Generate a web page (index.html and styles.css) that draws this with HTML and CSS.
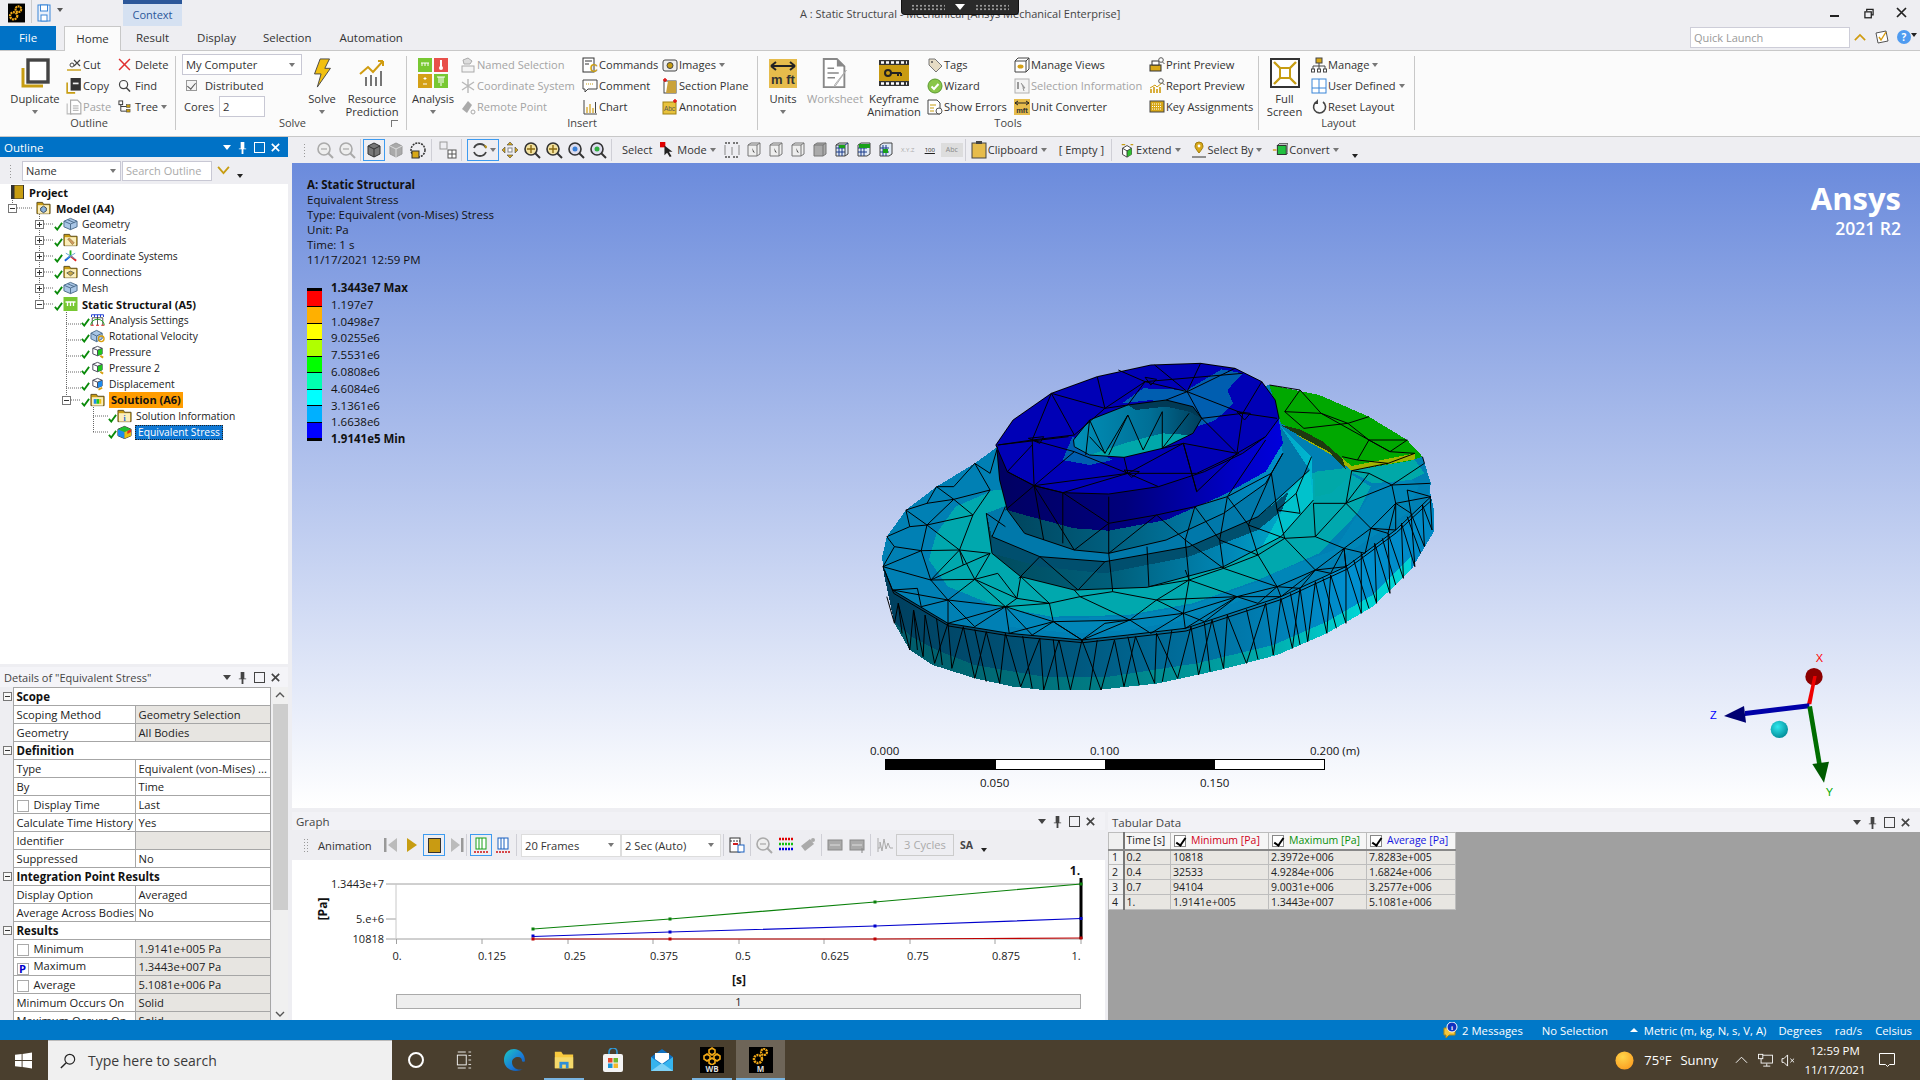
FILE: index.html
```html
<!DOCTYPE html>
<html lang="en">
<head>
<meta charset="utf-8">
<title>A : Static Structural - Mechanical</title>
<link rel="stylesheet" href="styles.css">
</head>
<body>
<svg class="sprite" width="0" height="0">
<defs>
<linearGradient id="rimG" x1="0" x2="1" y1="0" y2="0"><stop offset="0" stop-color="#003f5e"/><stop offset=".35" stop-color="#00587e"/><stop offset=".65" stop-color="#0078aa"/><stop offset=".85" stop-color="#0090d0"/><stop offset="1" stop-color="#0088c4"/></linearGradient>
<linearGradient id="rimB" x1="0" x2="1" y1="0" y2="0"><stop offset="0" stop-color="#005a68"/><stop offset=".4" stop-color="#007c84"/><stop offset=".7" stop-color="#00a8a8"/><stop offset=".9" stop-color="#00d4d4"/></linearGradient>
<linearGradient id="hubS" x1="0" x2="1" y1="0" y2="0"><stop offset="0" stop-color="#004a5c"/><stop offset=".4" stop-color="#00607c"/><stop offset=".75" stop-color="#0088b8"/><stop offset="1" stop-color="#00b8d0"/></linearGradient>
<linearGradient id="cylN" x1="0" x2="1" y1="0" y2="0"><stop offset="0" stop-color="#000062"/><stop offset=".45" stop-color="#00007c"/><stop offset=".8" stop-color="#0000c0"/><stop offset="1" stop-color="#0000dc"/></linearGradient>
<linearGradient id="cylT" x1="0" x2="1" y1="0" y2="0"><stop offset="0" stop-color="#00425a"/><stop offset=".5" stop-color="#006688"/><stop offset="1" stop-color="#0090cc"/></linearGradient>
<linearGradient id="holeG" x1="0" x2="1" y1="0" y2="0"><stop offset="0" stop-color="#0090b8"/><stop offset=".6" stop-color="#006f96"/><stop offset="1" stop-color="#003e5c"/></linearGradient>
<radialGradient id="ball" cx=".4" cy=".35" r=".7"><stop offset="0" stop-color="#30e8ee"/><stop offset="1" stop-color="#008a96"/></radialGradient>
<radialGradient id="sun" cx=".4" cy=".3" r=".8"><stop offset="0" stop-color="#ffd54a"/><stop offset="1" stop-color="#fb9a1e"/></radialGradient>
<linearGradient id="edgeG" x1="0" x2="1" y1="0" y2="1"><stop offset="0" stop-color="#1bc9c3"/><stop offset=".6" stop-color="#1a79d8"/><stop offset="1" stop-color="#0c4aa0"/></linearGradient>
</defs>
<symbol id="chk" viewBox="0 0 10 10"><path d="M1 6l2.600 3L9 1.500" fill="none" stroke="#0a8a0a" stroke-width="2"/></symbol>
<symbol id="cube" viewBox="0 0 16 14"><path d="M1 4l7-3 7 3v6l-7 3-7-3z" fill="#a9c6e6" stroke="#4a6a8a"/><path d="M1 4l7 3 7-3M8 7v6M5 2.500l7 3" fill="none" stroke="#4a6a8a"/></symbol>
<symbol id="cubeg" viewBox="0 0 16 14"><path d="M3 3l5-2 5 2v6l-5 2-5-2z" fill="#fff" stroke="#445"/><path d="M8 5l5-2v6l-5 2z" fill="#1fc81f"/><path d="M3 3l5 2 5-2M8 5v6" fill="none" stroke="#445"/><path d="M11 11l3 2" stroke="#d8a010" stroke-width="2"/></symbol>
<symbol id="cubeb" viewBox="0 0 16 14"><path d="M3 3l5-2 5 2v6l-5 2-5-2z" fill="#fff" stroke="#445"/><path d="M8 5l5-2v6l-5 2z" fill="#1c8cf0"/><path d="M3 3l5 2 5-2M8 5v6" fill="none" stroke="#445"/><path d="M9 13l4-2" stroke="#d8a010" stroke-width="2"/></symbol>
<symbol id="cuber" viewBox="0 0 16 14"><path d="M1 4l6-3 6 3v6l-6 3-6-3z" fill="#a9c6e6" stroke="#4a6a8a"/><path d="M1 4l6 3 6-3M7 7v6" fill="none" stroke="#4a6a8a"/><circle cx="12" cy="10" r="3" fill="none" stroke="#d8a010" stroke-width="1.400"/></symbol>
<symbol id="foldm" viewBox="0 0 16 14"><path d="M1 3V1h6l1 2h7v10H1z" fill="#c89b14" stroke="#5a4a1a"/><rect x="2" y="4" width="12" height="9" fill="#fbeebb"/><path d="M5 7l3-2 3 2v3l-3 2-3-2z" fill="#8ab0d8" stroke="#345"/></symbol>
<symbol id="foldt" viewBox="0 0 16 14"><path d="M1 3V1h6l1 2h7v10H1z" fill="#c89b14" stroke="#5a4a1a"/><rect x="2" y="4" width="12" height="9" fill="#fbeebb"/><path d="M5 6l5 6 2-2-5-5z" fill="#d09a60" stroke="#8a6a30" stroke-width=".6"/></symbol>
<symbol id="foldc" viewBox="0 0 16 14"><path d="M1 3V1h6l1 2h7v10H1z" fill="#c89b14" stroke="#5a4a1a"/><rect x="2" y="4" width="12" height="9" fill="#fbeebb"/><path d="M4 8l4-2 4 2-4 3z" fill="#c8a848" stroke="#665"/></symbol>
<symbol id="folds" viewBox="0 0 16 14"><path d="M1 3V1h6l1 2h7v10H1z" fill="#c89b14" stroke="#5a4a1a"/><rect x="2" y="4" width="12" height="9" fill="#fbeebb"/><rect x="4" y="6" width="3" height="5" fill="#1c8cf0"/><rect x="7" y="6" width="3" height="5" fill="#1fc81f"/><rect x="10" y="6" width="2" height="5" fill="#f0c010"/></symbol>
<symbol id="eqs" viewBox="0 0 16 14"><path d="M1 4l7-3 7 3v7l-7 3-7-3z" fill="#777" stroke="#333"/><path d="M1 4l7 3v7l-7-3z" fill="#1c8cf0"/><path d="M8 7l7-3v7l-7 3z" fill="#e8c010"/><path d="M1 4l7-3 7 3-7 3z" fill="#20c030"/><path d="M11 6l4-2v3l-4 2z" fill="#e03020"/></symbol>
<symbol id="book" viewBox="0 0 14 14"><rect x="1" y="0" width="12" height="14" fill="#c79d12" stroke="#333"/><rect x="1" y="0" width="3" height="14" fill="#333"/></symbol>
<symbol id="coord" viewBox="0 0 16 14"><path d="M8 7V1" stroke="#20b020" stroke-width="2"/><path d="M8 7L2 12" stroke="#1060e0" stroke-width="2"/><path d="M8 7l6 5" stroke="#e02020" stroke-width="2"/><path d="M3 4l10 6M13 4L3 10" stroke="#60a0d0"/></symbol>
<symbol id="ss" viewBox="0 0 14 14"><rect width="14" height="14" fill="#78c832"/><path d="M2 5h10M4 5v4M7 5v4M10 5v4" stroke="#fff" stroke-width="1.300"/></symbol>
<symbol id="an" viewBox="0 0 20 16"><path d="M2 1h16M2 1v3M6 1v3M10 1v3M14 1v3M18 1v3" stroke="#1030d0" stroke-width="1.200"/><path d="M3 15V5h14v10M10 4v11" fill="none" stroke="#222"/><path d="M1 15a9 8 0 0 1 18 0" fill="none" stroke="#10a010" stroke-width="1.200"/><path d="M1 15h4M8 15h4M15 15h4" stroke="#e02020" stroke-width="1.400"/></symbol>
<symbol id="dup" viewBox="0 0 30 30"><path d="M3 10v18h20" fill="none" stroke="#c79d12" stroke-width="3"/><rect x="8" y="2" width="20" height="22" fill="#fff" stroke="#444" stroke-width="3.400"/></symbol>
<symbol id="cut" viewBox="0 0 16 14"><path d="M8 2l6 6M14 2L8 8" stroke="#444" stroke-width="1.200"/><circle cx="6" cy="7" r="2" fill="none" stroke="#444"/><path d="M1 12h14" stroke="#c79d12" stroke-width="1.400"/></symbol>
<symbol id="del" viewBox="0 0 12 12"><path d="M1 1l10 10M11 1L1 11" stroke="#e03030" stroke-width="1.400"/></symbol>
<symbol id="copy" viewBox="0 0 14 14"><path d="M1 4v9h7" fill="none" stroke="#c79d12" stroke-width="1.400"/><rect x="4" y="0" width="9" height="11" fill="#333"/><rect x="6" y="4" width="5" height="1.500" fill="#eee"/></symbol>
<symbol id="find" viewBox="0 0 14 14"><circle cx="6" cy="6" r="4.400" fill="none" stroke="#444" stroke-width="1.300"/><path d="M9 9.500l4 4" stroke="#444" stroke-width="1.600"/></symbol>
<symbol id="paste" viewBox="0 0 14 14"><path d="M1 4v9h4" fill="none" stroke="#bbb"/><path d="M4 1h6l3 3v9H4z" fill="#fff" stroke="#aaa"/><path d="M6 6h5M6 8h5M6 10h5" stroke="#bbb"/></symbol>
<symbol id="tree" viewBox="0 0 14 14"><rect x="1" y="1" width="4" height="4" fill="none" stroke="#333"/><rect x="9" y="5" width="4" height="3" fill="#c79d12" stroke="#333" stroke-width=".5"/><rect x="9" y="10" width="4" height="3" fill="#c79d12" stroke="#333" stroke-width=".5"/><path d="M3 5v7h6M3 7h6" fill="none" stroke="#333"/></symbol>
<symbol id="bolt" viewBox="0 0 20 32"><path d="M8 1h10l-5 10h6L5 31l4-14H2z" fill="#f2c010" stroke="#444"/></symbol>
<symbol id="resp" viewBox="0 0 28 30"><path d="M2 16l8-7 5 5L25 3M25 3l-5 0M25 3v5" fill="none" stroke="#d09c10" stroke-width="2"/><path d="M8 28v-9M13 28V17M18 28v-9M23 28v-15" stroke="#555" stroke-width="1.600"/></symbol>
<symbol id="ana" viewBox="0 0 30 30"><rect width="14" height="14" fill="#78c832"/><rect x="16" width="14" height="14" fill="#e8504a"/><rect y="16" width="14" height="14" fill="#d4a016"/><rect x="16" y="16" width="14" height="14" fill="#78c832"/><path d="M3 5h8M4 5v3M7 5v3M10 5v3" stroke="#fff"/><path d="M23 2v8" stroke="#fff" stroke-width="2"/><circle cx="23" cy="10" r="2" fill="#fff"/><path d="M7 19v3M5.500 20.500h3M5 26h4" stroke="#fff"/><path d="M19 19h8M21 19v6M25 19v6M23 19v9" stroke="#fff"/></symbol>
<symbol id="named" viewBox="0 0 16 16"><path d="M3 3l5-2 4 3-2 3H4z" fill="#ddd" stroke="#aaa"/><rect x="2" y="9" width="12" height="6" fill="#f4f4f4" stroke="#aaa"/></symbol>
<symbol id="csys" viewBox="0 0 16 16"><path d="M8 1v14M2 4l12 8M14 4L2 12" stroke="#b8b8b8" stroke-width="1.400"/></symbol>
<symbol id="rpt" viewBox="0 0 16 16"><path d="M2 10l6-8 4 4-5 8z" fill="#aaa"/><circle cx="13" cy="13" r="2" fill="none" stroke="#aaa"/></symbol>
<symbol id="comment" viewBox="0 0 16 16"><path d="M1 2h14v9H6l-3 3v-3H1z" fill="#fff" stroke="#444"/><path d="M4 6h8" stroke="#c79d12" stroke-dasharray="1 1"/></symbol>
<symbol id="chart" viewBox="0 0 16 16"><path d="M2 1v14h13" fill="none" stroke="#444"/><path d="M5 14V8M8 14V5M11 14V9" stroke="#d09c10" stroke-width="1.200"/><path d="M13.500 14V3" stroke="#444"/></symbol>
<symbol id="image" viewBox="0 0 16 16"><rect x="1" y="3" width="14" height="11" rx="2" fill="#eee" stroke="#444"/><circle cx="8" cy="8.500" r="3" fill="#c79d12" stroke="#444"/></symbol>
<symbol id="sect" viewBox="0 0 16 16"><rect x="2" y="3" width="12" height="12" fill="#fff" stroke="#444"/><path d="M6 3h8v12H4z" fill="#caa23a"/><path d="M3 0v4M1 2h4" stroke="#e01010" stroke-width="1.400"/></symbol>
<symbol id="wsh" viewBox="0 0 28 32"><path d="M2 1h14l8 8v22H2z" fill="#fff" stroke="#888" stroke-width="2"/><path d="M16 1v8h8" fill="#888"/><path d="M6 11h7M6 16h12M6 21h8" stroke="#888" stroke-width="1.500"/><path d="M26 13L15 29l-2 2 1-3z" fill="#eee" stroke="#aaa"/></symbol>
<symbol id="key" viewBox="0 0 30 26"><rect width="30" height="26" fill="#333"/><rect y="5" width="30" height="16" fill="#c99b12"/><path d="M2 2.500h26M2 23.500h26" stroke="#fff" stroke-width="2.400" stroke-dasharray="3 2"/><circle cx="9" cy="13" r="3" fill="none" stroke="#222" stroke-width="2"/><path d="M12 13h10M19 13v3M22 13v3" stroke="#222" stroke-width="2"/></symbol>
<symbol id="tag" viewBox="0 0 16 16"><path d="M2 2h6l7 7-6 6-7-7z" fill="#e7dcc4" stroke="#777"/><circle cx="5" cy="5" r="1" fill="#555"/></symbol>
<symbol id="wiz" viewBox="0 0 16 16"><circle cx="8" cy="8" r="7" fill="#8ac64a" stroke="#5a9a30"/><path d="M4.500 8.500l2.500 2.500 4.500-5" fill="none" stroke="#fff" stroke-width="2"/></symbol>
<symbol id="err" viewBox="0 0 16 16"><path d="M1 1h9l3 3v11H1z" fill="#fff" stroke="#444"/><path d="M3 6h6M3 9h4M3 12h4" stroke="#c79d12"/><circle cx="12" cy="12" r="3" fill="#fff" stroke="#555"/></symbol>
<symbol id="views" viewBox="0 0 16 16"><path d="M1 4l3-3h11v11l-3 3H1z" fill="#fff" stroke="#444"/><path d="M1 4h11v11M12 4l3-3" fill="none" stroke="#444"/><ellipse cx="6.500" cy="9.500" rx="3" ry="2" fill="#d4a016"/></symbol>
<symbol id="selinf" viewBox="0 0 16 16"><rect x="1" y="1" width="14" height="14" fill="#f4f4f4" stroke="#b0b0b0"/><path d="M4 4v7" stroke="#999" stroke-width="2"/><path d="M7 5l4 5-2 0 1 3" fill="#999" stroke="#999"/></symbol>
<symbol id="print" viewBox="0 0 16 16"><rect x="1" y="8" width="11" height="6" fill="#d8a818" stroke="#333"/><rect x="3" y="4" width="7" height="4" fill="#fff" stroke="#333"/><circle cx="12" cy="3" r="2.300" fill="#fff" stroke="#555"/><path d="M13.500 5l2 2" stroke="#555"/></symbol>
<symbol id="rprev" viewBox="0 0 16 16"><path d="M2 15V11M5 15V9M8 15V11M11 15V9" stroke="#d09c10" stroke-width="1.600"/><path d="M1 10l5-3 2 2 5-4" fill="none" stroke="#d09c10"/><circle cx="12" cy="3" r="2.300" fill="#fff" stroke="#555"/><path d="M13.500 5l2 2" stroke="#555"/></symbol>
<symbol id="kbd" viewBox="0 0 16 16"><rect x="1" y="2" width="14" height="11" fill="#d8a818" stroke="#444"/><path d="M3 5h10M3 7.500h10M3 10h10" stroke="#fff" stroke-dasharray="1 1"/></symbol>
<symbol id="full" viewBox="0 0 30 30"><rect x="1" y="1" width="28" height="28" fill="#fff" stroke="#333" stroke-width="2"/><rect x="10" y="10" width="10" height="10" fill="none" stroke="#c79d12" stroke-width="2"/><path d="M4 4l6 6M26 4l-6 6M4 26l6-6M26 26l-6-6" stroke="#c79d12" stroke-width="2.400"/></symbol>
<symbol id="mgr" viewBox="0 0 16 16"><rect x="5" y="1" width="6" height="5" fill="#d8a818" stroke="#444"/><path d="M8 6v3M2 12V9h12v3M8 9v3" fill="none" stroke="#444"/><rect x="0.500" y="12" width="3" height="3" fill="#fff" stroke="#444"/><rect x="6.500" y="12" width="3" height="3" fill="#fff" stroke="#444"/><rect x="12.500" y="12" width="3" height="3" fill="#fff" stroke="#444"/></symbol>
<symbol id="udef" viewBox="0 0 16 16"><rect x="1" y="1" width="14" height="14" fill="#fff" stroke="#3a86d8"/><path d="M1 10h14M8 1v14" stroke="#3a86d8"/></symbol>
<symbol id="reset" viewBox="0 0 16 16"><path d="M12 3a6 6 0 1 1-6-.5" fill="none" stroke="#444" stroke-width="1.600"/><path d="M7 0v5H3z" fill="#444"/></symbol>
<symbol id="zm" viewBox="0 0 18 18"><circle cx="8" cy="8" r="6" fill="#eee" stroke="#aaa" stroke-width="1.600"/><path d="M12 12l5 5" stroke="#aaa" stroke-width="2"/><path d="M5 8h6" stroke="#999"/></symbol>
<symbol id="zc" viewBox="0 0 18 18"><circle cx="8" cy="8" r="6" fill="#f3e2a0" stroke="#333" stroke-width="1.600"/><path d="M12 12l5 5" stroke="#333" stroke-width="2"/><path d="M8 4v8M4 8h8" stroke="#8a6a10" stroke-width="1.400"/></symbol>
<symbol id="zb" viewBox="0 0 18 18"><circle cx="8" cy="8" r="6" fill="#dde" stroke="#333" stroke-width="1.600"/><path d="M12 12l5 5" stroke="#333" stroke-width="2"/><circle cx="8" cy="8" r="2.500" fill="#3a80d8"/></symbol>
<symbol id="zg" viewBox="0 0 18 18"><circle cx="8" cy="8" r="6" fill="#dde" stroke="#333" stroke-width="1.600"/><path d="M12 12l5 5" stroke="#333" stroke-width="2"/><circle cx="8" cy="8" r="2.500" fill="#30b040"/></symbol>
<symbol id="box3" viewBox="0 0 18 18"><path d="M3 5l6-3 6 3v8l-6 3-6-3z" fill="#777" stroke="#333"/><path d="M3 5l6 3 6-3M9 8v8" fill="none" stroke="#333"/></symbol>
<symbol id="box3g" viewBox="0 0 18 18"><path d="M3 5l6-3 6 3v8l-6 3-6-3z" fill="#aaa" stroke="#999"/><path d="M3 5l6 3 6-3M9 8v8" fill="none" stroke="#ddd"/></symbol>
<symbol id="wire" viewBox="0 0 18 18"><circle cx="9" cy="9" r="7" fill="none" stroke="#333" stroke-width="1.500" stroke-dasharray="2 1"/><rect x="3" y="10" width="7" height="7" fill="#d8a818" stroke="#333"/></symbol>
<symbol id="split" viewBox="0 0 18 18"><rect x="1" y="1" width="7" height="7" fill="none" stroke="#999"/><rect x="9" y="9" width="8" height="8" fill="#fff" stroke="#555"/><path d="M13 9v8M9 13h8" stroke="#555"/></symbol>
<symbol id="rot" viewBox="0 0 18 18"><path d="M3 7a6.500 6.500 0 0 1 12 0M15 11a6.500 6.500 0 0 1-12 0" fill="none" stroke="#444" stroke-width="1.800"/><path d="M13 4l3 1-1 3" fill="#c79d12"/></symbol>
<symbol id="pan" viewBox="0 0 18 18"><path d="M9 1l3 3H6zM9 17l-3-3h6zM1 9l3-3v6zM17 9l-3 3V6z" fill="#d8a818" stroke="#444" stroke-width=".6"/><rect x="7" y="7" width="4" height="4" fill="#fff" stroke="#888"/></symbol>
<symbol id="mode" viewBox="0 0 18 18"><rect x="0" y="0" width="6" height="6" fill="#e00000"/><path d="M5 4l0 11 3-3 3 5 2-1-3-5 4 0z" fill="#222"/></symbol>
<symbol id="s1" viewBox="0 0 18 18"><path d="M2 2h6M10 2h6M2 16h6M10 16h6" stroke="#777" stroke-width="2" stroke-dasharray="2 1"/><path d="M2 4v10M9 6v8M16 4v10" stroke="#888"/></symbol>
<symbol id="s2" viewBox="0 0 18 18"><path d="M3 4l3-2h9v11l-3 2H3z" fill="#eee" stroke="#777"/><path d="M3 4h9v11M12 4l3-2" fill="none" stroke="#777"/><path d="M7 7l3 5-2-1z" fill="#555"/></symbol>
<symbol id="s2d" viewBox="0 0 18 18"><path d="M3 4l3-2h9v11l-3 2H3z" fill="#aaa" stroke="#777"/><path d="M3 4h9v11M12 4l3-2" fill="none" stroke="#777"/></symbol>
<symbol id="g1" viewBox="0 0 18 18"><path d="M3 4l3-2h9v11l-3 2H3z" fill="#dfe9f5" stroke="#444"/><path d="M3 7h9M3 11h9M6 4v11M9 4v11M12 4l3-2" fill="none" stroke="#1a3a8a"/><path d="M3 4h9v11" fill="none" stroke="#444"/><rect x="6" y="4" width="6" height="3" fill="#18a018"/></symbol>
<symbol id="g2" viewBox="0 0 18 18"><path d="M3 4l3-2h9v11l-3 2H3z" fill="#dfe9f5" stroke="#444"/><path d="M3 7h9M3 11h9M6 4v11M9 4v11" fill="none" stroke="#1a3a8a"/><rect x="4" y="3" width="11" height="4" fill="#18a018"/></symbol>
<symbol id="g3" viewBox="0 0 18 18"><path d="M3 4l3-2h9v11l-3 2H3z" fill="#dfe9f5" stroke="#444"/><path d="M3 7h9M3 11h9M6 4v11M9 4v11" fill="none" stroke="#1a3a8a"/><rect x="6" y="8" width="5" height="4" fill="#18a018"/></symbol>
<symbol id="clipb" viewBox="0 0 16 18"><rect x="1" y="2" width="14" height="15" fill="#e6bc4c" stroke="#444"/><rect x="5" y="0" width="6" height="3" fill="#444"/></symbol>
<symbol id="extd" viewBox="0 0 18 18"><path d="M4 7l5-3 5 3v7l-5 3-5-3z" fill="#fff" stroke="#333"/><path d="M9 10l5-3v7l-5 3z" fill="#30c030"/><path d="M4 7l5 3 5-3M9 10v7" fill="none" stroke="#333"/><path d="M3 3h4M13 3h3" stroke="#c79d12" stroke-width="1.500"/></symbol>
<symbol id="pin" viewBox="0 0 16 18"><path d="M8 12c-3-4-4-5-4-7a4 4 0 0 1 8 0c0 2-1 3-4 7z" fill="#d8a818" stroke="#a07c10"/><circle cx="8" cy="5" r="1.400" fill="#fff"/><path d="M1 16h14" stroke="#666" stroke-width="1.400"/></symbol>
<symbol id="conv" viewBox="0 0 18 18"><path d="M1 9h4" stroke="#d09c10" stroke-width="1.500"/><rect x="6" y="4" width="10" height="10" fill="#22c040" stroke="#222"/><path d="M6 4l2-2h10v10l-2 2" fill="none" stroke="#222"/></symbol>
<symbol id="sv" viewBox="0 0 14 18"><rect x="1" y="1" width="12" height="16" fill="#eaf1fb" stroke="#3a86d8"/><rect x="3.500" y="1" width="7" height="6" fill="#fff" stroke="#3a86d8"/><rect x="4" y="11" width="6" height="6" fill="#fff" stroke="#3a86d8"/></symbol>
<symbol id="mech" viewBox="0 0 18 20"><rect width="18" height="20" fill="#000"/><circle cx="11" cy="6" r="3" fill="none" stroke="#f0a816" stroke-width="2.200" stroke-dasharray="2 .6"/><circle cx="6" cy="13" r="3.800" fill="none" stroke="#f0a816" stroke-width="2.400" stroke-dasharray="2 .8"/></symbol>
</svg>

<div class="app">
 <header class="titlebar">
  <div class="tb-left">
   <svg class="logo"><use href="#mech"/></svg>
   <i class="vsep"></i>
   <svg class="save"><use href="#sv"/></svg>
   <i class="arr qa"></i>
   <div class="context"><span>Context</span></div>
  </div>
  <div class="title">A : Static Structural - Mechanical [Ansys Mechanical Enterprise]</div>
  <div class="rdp"><i class="dots"></i><b class="rdp-a"></b><i class="dots"></i></div>
  <div class="winctl">
   <i class="wmin"></i><svg class="wres" viewBox="0 0 11 11"><path d="M3 3V1h7v6H8" fill="none" stroke="#222" stroke-width="1.400"/><rect x="1" y="3.700" width="7" height="6.500" fill="none" stroke="#222" stroke-width="1.400"/></svg><svg class="wclose" viewBox="0 0 11 11"><path d="M1 1l9 9M10 1l-9 9" stroke="#222" stroke-width="1.700"/></svg>
  </div>
 </header>

 <nav class="tabs">
  <div class="t-file">File</div>
  <div class="t-home">Home</div>
  <div class="t-i t1">Result</div><div class="t-i t2">Display</div><div class="t-i t3">Selection</div><div class="t-i t4">Automation</div>
  <div class="quick">
   <div class="ql">Quick Launch</div>
   <svg class="ic12" viewBox="0 0 14 10"><path d="M1 8l6-6 6 6" fill="none" stroke="#d09c10" stroke-width="2"/></svg>
   <svg class="ic14" viewBox="0 0 14 14"><path d="M1 3l10-2 2 10-10 2z" fill="#fff" stroke="#555"/><path d="M4 7l2 3 5-8" fill="none" stroke="#d89c10" stroke-width="1.400"/></svg>
   <div class="help">?</div><i class="arr dk"></i>
  </div>
 </nav>

 <section class="ribbon">
  <div class="grp g-outline"><div class="gb">
    <div class="big w54"><svg class="i30"><use href="#dup"/></svg><span>Duplicate</span><i class="arr"></i></div>
    <div class="col w52">
     <div class="ri"><svg><use href="#cut"/></svg>Cut</div>
     <div class="ri"><svg><use href="#copy"/></svg>Copy</div>
     <div class="ri dis"><svg><use href="#paste"/></svg>Paste</div>
    </div>
    <div class="col w58">
     <div class="ri"><svg class="sm"><use href="#del"/></svg>Delete</div>
     <div class="ri"><svg class="sm"><use href="#find"/></svg>Find</div>
     <div class="ri"><svg class="sm"><use href="#tree"/></svg>Tree<i class="arr"></i></div>
    </div>
   </div><div class="gl">Outline</div></div>

  <div class="grp g-solve"><div class="gb">
    <div class="col solvec">
     <div class="combo"><span>My Computer</span><i class="arr"></i></div>
     <div class="dist"><i class="cb on"></i>Distributed</div>
     <div class="cores">Cores<span class="inp">2</span></div>
    </div>
    <div class="big w40"><svg class="i30"><use href="#bolt"/></svg><span>Solve</span><i class="arr"></i></div>
    <div class="big w60"><svg class="i30"><use href="#resp"/></svg><span>Resource<br>Prediction</span></div>
   </div><div class="gl">Solve</div><i class="launcher"></i></div>

  <div class="grp g-insert"><div class="gb">
    <div class="big w52"><svg class="i30"><use href="#ana"/></svg><span>Analysis</span><i class="arr"></i></div>
    <div class="col w122">
     <div class="ri dis"><svg><use href="#named"/></svg>Named Selection</div>
     <div class="ri dis"><svg><use href="#csys"/></svg>Coordinate System</div>
     <div class="ri dis"><svg><use href="#rpt"/></svg>Remote Point</div>
    </div>
    <div class="col w80">
     <div class="ri"><svg viewBox="0 0 16 16"><rect x="1" y="1" width="11" height="14" fill="#fff" stroke="#333"/><path d="M3 4h7M3 7h4" stroke="#333"/><text x="8" y="15" font-size="11" font-weight="700" fill="#c79d12" font-family="Liberation Sans">C</text></svg>Commands</div>
     <div class="ri"><svg><use href="#comment"/></svg>Comment</div>
     <div class="ri"><svg><use href="#chart"/></svg>Chart</div>
    </div>
    <div class="col w95">
     <div class="ri"><svg><use href="#image"/></svg>Images<i class="arr"></i></div>
     <div class="ri"><svg><use href="#sect"/></svg>Section Plane</div>
     <div class="ri"><svg viewBox="0 0 16 16"><rect x="1" y="3" width="13" height="12" fill="#e8c23c" stroke="#a08010"/><text x="7.500" y="12" font-size="6.500" text-anchor="middle" fill="#555" font-family="Liberation Sans">Abc</text><path d="M13 0v4M11 2h4" stroke="#e01010" stroke-width="1.400"/></svg>Annotation</div>
    </div>
   </div><div class="gl">Insert</div></div>

  <div class="grp g-tools"><div class="gb">
    <div class="big w50"><svg class="i30" viewBox="0 0 28 30"><rect y="1" width="28" height="29" fill="#e6bc4c"/><path d="M2 8h24M2 8l5-4M2 8l5 4M26 8l-5-4M26 8l-5 4" fill="none" stroke="#222" stroke-width="2"/><text x="14" y="26" font-size="13" font-weight="700" text-anchor="middle" fill="#333" font-family="Liberation Sans">m ft</text></svg><span>Units</span><i class="arr"></i></div>
    <div class="big w54 dis"><svg class="i30"><use href="#wsh"/></svg><span>Worksheet</span></div>
    <div class="big w64"><svg class="i30"><use href="#key"/></svg><span>Keyframe<br>Animation</span></div>
    <div class="col w87">
     <div class="ri"><svg><use href="#tag"/></svg>Tags</div>
     <div class="ri"><svg><use href="#wiz"/></svg>Wizard</div>
     <div class="ri"><svg><use href="#err"/></svg>Show Errors</div>
    </div>
    <div class="col w135">
     <div class="ri"><svg><use href="#views"/></svg>Manage Views</div>
     <div class="ri dis"><svg><use href="#selinf"/></svg>Selection Information</div>
     <div class="ri"><svg viewBox="0 0 16 16"><rect width="16" height="16" fill="#e6bc4c"/><path d="M1 4h14M1 4l3-2M1 4l3 2M15 4l-3-2M15 4l-3 2" fill="none" stroke="#222"/><text x="8" y="14" font-size="7.500" font-weight="700" text-anchor="middle" fill="#333" font-family="Liberation Sans">mft</text></svg>Unit Converter</div>
    </div>
    <div class="col w110">
     <div class="ri"><svg><use href="#print"/></svg>Print Preview</div>
     <div class="ri"><svg><use href="#rprev"/></svg>Report Preview</div>
     <div class="ri"><svg><use href="#kbd"/></svg>Key Assignments</div>
    </div>
   </div><div class="gl">Tools</div></div>

  <div class="grp g-layout"><div class="gb">
    <div class="big w51"><svg class="i30"><use href="#full"/></svg><span>Full<br>Screen</span></div>
    <div class="col w104">
     <div class="ri"><svg><use href="#mgr"/></svg>Manage<i class="arr"></i></div>
     <div class="ri"><svg><use href="#udef"/></svg>User Defined<i class="arr"></i></div>
     <div class="ri"><svg><use href="#reset"/></svg>Reset Layout</div>
    </div>
   </div><div class="gl">Layout</div></div>
 </section>

 <main class="work">
  <aside class="left">
   <section class="outline">
    <div class="phead blue"><span>Outline</span><i class="hdots"></i><i class="dd"></i><svg class="ph" viewBox="0 0 12 14"><path d="M4 1h4v7h2v1H7v5H5V9H2V8h2z" fill="currentColor"/></svg><i class="psq"></i><svg class="ph" viewBox="0 0 12 12"><path d="M2 2l8 8M10 2l-8 8" stroke="currentColor" stroke-width="1.800"/></svg></div>
    <div class="otool"><i class="grip"></i><div class="obox o1">Name<i class="arr"></i></div><div class="obox o2">Search Outline</div><svg class="filt" viewBox="0 0 14 10"><path d="M1 1l6 7 6-7" fill="none" stroke="#c79d12" stroke-width="2"/></svg><i class="arr dk o3"></i></div>
    <div class="treewrap">
     <svg class="conn" width="140" height="260"><path d="M12.500 12V24M17 24H32M39.500 24V120M44 40h10M44 56h10M44 72h10M44 88h10M44 104h10M44 120h10M66.500 124V216M66 140h15M66 156h15M66 172h15M66 188h15M66 204h15M71 216h10M93.500 221V248M93 232h15M93 248h15" fill="none" stroke="#666" stroke-dasharray="1 1"/></svg>
     <div class="tr b lp"><svg class="ti"><use href="#book"/></svg><span class="tx">Project</span></div>
     <div class="tr b l1"><i class="exp m"></i><svg class="ti"><use href="#foldm"/></svg><span class="tx">Model (A4)</span></div>
     <div class="tr l2"><i class="exp p"></i><svg class="ck"><use href="#chk"/></svg><svg class="ti"><use href="#cube"/></svg><span class="tx">Geometry</span></div>
     <div class="tr l2"><i class="exp p"></i><svg class="ck"><use href="#chk"/></svg><svg class="ti"><use href="#foldt"/></svg><span class="tx">Materials</span></div>
     <div class="tr l2"><i class="exp p"></i><svg class="ck"><use href="#chk"/></svg><svg class="ti"><use href="#coord"/></svg><span class="tx">Coordinate Systems</span></div>
     <div class="tr l2"><i class="exp p"></i><svg class="ck"><use href="#chk"/></svg><svg class="ti"><use href="#foldc"/></svg><span class="tx">Connections</span></div>
     <div class="tr l2"><i class="exp p"></i><svg class="ck"><use href="#chk"/></svg><svg class="ti"><use href="#cube"/></svg><span class="tx">Mesh</span></div>
     <div class="tr b l2"><i class="exp m"></i><svg class="ck"><use href="#chk"/></svg><svg class="ti"><use href="#ss"/></svg><span class="tx">Static Structural (A5)</span></div>
     <div class="tr l3"><svg class="ck"><use href="#chk"/></svg><svg class="ti"><use href="#an"/></svg><span class="tx">Analysis Settings</span></div>
     <div class="tr l3"><svg class="ck"><use href="#chk"/></svg><svg class="ti"><use href="#cuber"/></svg><span class="tx">Rotational Velocity</span></div>
     <div class="tr l3"><svg class="ck"><use href="#chk"/></svg><svg class="ti"><use href="#cubeg"/></svg><span class="tx">Pressure</span></div>
     <div class="tr l3"><svg class="ck"><use href="#chk"/></svg><svg class="ti"><use href="#cubeg"/></svg><span class="tx">Pressure 2</span></div>
     <div class="tr l3"><svg class="ck"><use href="#chk"/></svg><svg class="ti"><use href="#cubeb"/></svg><span class="tx">Displacement</span></div>
     <div class="tr b l3x"><i class="exp m"></i><svg class="ck"><use href="#chk"/></svg><svg class="ti"><use href="#folds"/></svg><span class="tx sol">Solution (A6)</span></div>
     <div class="tr l4"><svg class="ck"><use href="#chk"/></svg><svg class="ti" viewBox="0 0 16 14"><path d="M1 3V1h6l1 2h7v10H1z" fill="#c89b14" stroke="#5a4a1a"/><rect x="2" y="4" width="12" height="9" fill="#fbeebb"/><text x="8" y="12" font-size="8" font-weight="700" text-anchor="middle" fill="#1060d0" font-family="Liberation Serif">i</text></svg><span class="tx">Solution Information</span></div>
     <div class="tr l4"><svg class="ck"><use href="#chk"/></svg><svg class="ti"><use href="#eqs"/></svg><span class="tx sel">Equivalent Stress</span></div>
    </div>
   </section>
   <section class="details">
    <div class="phead dh"><span>Details of "Equivalent Stress"</span><i class="hdots"></i><i class="dd"></i><svg class="ph" viewBox="0 0 12 14"><path d="M4 1h4v7h2v1H7v5H5V9H2V8h2z" fill="currentColor"/></svg><i class="psq"></i><svg class="ph" viewBox="0 0 12 12"><path d="M2 2l8 8M10 2l-8 8" stroke="currentColor" stroke-width="1.800"/></svg></div>
    <div class="dbody">
     <div class="gridclip">
      <table class="dt">
       <colgroup><col class="cg"><col class="cn"><col class="cv2"></colgroup>
       <tr class="sec"><td class="g"><i class="exp m"></i></td><td colspan="2">Scope</td></tr>
       <tr><td class="g"></td><td>Scoping Method</td><td class="ro">Geometry Selection</td></tr>
       <tr><td class="g"></td><td>Geometry</td><td class="ro">All Bodies</td></tr>
       <tr class="sec"><td class="g"><i class="exp m"></i></td><td colspan="2">Definition</td></tr>
       <tr><td class="g"></td><td>Type</td><td>Equivalent (von-Mises) ...</td></tr>
       <tr><td class="g"></td><td>By</td><td>Time</td></tr>
       <tr><td class="g"></td><td><i class="pb"></i>Display Time</td><td>Last</td></tr>
       <tr><td class="g"></td><td>Calculate Time History</td><td>Yes</td></tr>
       <tr><td class="g"></td><td>Identifier</td><td class="ro"></td></tr>
       <tr><td class="g"></td><td>Suppressed</td><td>No</td></tr>
       <tr class="sec"><td class="g"><i class="exp m"></i></td><td colspan="2">Integration Point Results</td></tr>
       <tr><td class="g"></td><td>Display Option</td><td>Averaged</td></tr>
       <tr><td class="g"></td><td>Average Across Bodies</td><td>No</td></tr>
       <tr class="sec"><td class="g"><i class="exp m"></i></td><td colspan="2">Results</td></tr>
       <tr><td class="g"></td><td><i class="pb"></i>Minimum</td><td class="ro">1.9141e+005 Pa</td></tr>
       <tr><td class="g"></td><td><i class="pb pp">P</i>Maximum</td><td class="ro">1.3443e+007 Pa</td></tr>
       <tr><td class="g"></td><td><i class="pb"></i>Average</td><td class="ro">5.1081e+006 Pa</td></tr>
       <tr><td class="g"></td><td>Minimum Occurs On</td><td class="ro">Solid</td></tr>
       <tr><td class="g"></td><td>Maximum Occurs On</td><td class="ro">Solid</td></tr>
      </table>
     </div>
     <div class="vscroll"><svg viewBox="0 0 10 6" class="sa"><path d="M1 5l4-4 4 4" fill="none" stroke="#555" stroke-width="1.400"/></svg><i class="thumb"></i><svg viewBox="0 0 10 6" class="sa bot"><path d="M1 1l4 4 4-4" fill="none" stroke="#555" stroke-width="1.400"/></svg></div>
    </div>
   </section>
  </aside>

  <div class="right">
   <div class="vtool">
    <i class="grip"></i>
    <b class="tbtn"><svg><use href="#zm"/></svg></b><b class="tbtn"><svg><use href="#zm"/></svg></b><i class="tsep"></i>
    <b class="tbtn on"><svg><use href="#box3"/></svg></b><b class="tbtn"><svg><use href="#box3g"/></svg></b><b class="tbtn"><svg><use href="#wire"/></svg></b><i class="tsep"></i>
    <b class="tbtn spl"><svg><use href="#split"/></svg></b><i class="tsep r5"></i>
    <b class="tbtn on wide"><svg><use href="#rot"/></svg><i class="arr"></i></b><b class="tbtn"><svg><use href="#pan"/></svg></b><b class="tbtn"><svg><use href="#zc"/></svg></b><b class="tbtn"><svg><use href="#zc"/></svg></b><b class="tbtn"><svg><use href="#zb"/></svg></b><b class="tbtn"><svg><use href="#zg"/></svg></b><i class="tsep"></i>
    <span class="tt sel1">Select</span>
    <span class="tt icn m1"><svg><use href="#mode"/></svg>Mode<i class="arr"></i></span>
    <b class="tbtn n"><svg><use href="#s1"/></svg></b><b class="tbtn n"><svg><use href="#s2"/></svg></b><b class="tbtn n"><svg><use href="#s2"/></svg></b><b class="tbtn n"><svg><use href="#s2"/></svg></b><b class="tbtn n"><svg><use href="#s2d"/></svg></b><b class="tbtn n"><svg><use href="#g1"/></svg></b><b class="tbtn n"><svg><use href="#g2"/></svg></b><b class="tbtn n"><svg><use href="#g3"/></svg></b>
    <span class="xyz">X.Y.Z</span><span class="hund">100</span><span class="abc">Abc</span><i class="tsep r5"></i>
    <span class="tt icn"><svg><use href="#clipb"/></svg>Clipboard<i class="arr"></i></span>
    <span class="tt empt">[ Empty ]</span><i class="tsep r7"></i>
    <span class="tt icn"><svg><use href="#extd"/></svg>Extend<i class="arr"></i></span>
    <span class="tt icn sb"><svg><use href="#pin"/></svg>Select By<i class="arr"></i></span>
    <span class="tt icn cv"><svg><use href="#conv"/></svg>Convert<i class="arr"></i></span>
    <i class="arr dk tend"></i>
   </div>

   <div class="viewport">
    <div class="anno">
     <b>A: Static Structural</b>
     <div>Equivalent Stress</div>
     <div>Type: Equivalent (von-Mises) Stress</div>
     <div>Unit: Pa</div>
     <div>Time: 1 s</div>
     <div>11/17/2021 12:59 PM</div>
     <div class="legend">
      <div class="lbar"><i class="c1"></i><i class="c2"></i><i class="c3"></i><i class="c4"></i><i class="c5"></i><i class="c6"></i><i class="c7"></i><i class="c8"></i><i class="c9"></i></div>
      <div class="llab"><b>1.3443e7 Max</b><span>1.197e7</span><span>1.0498e7</span><span>9.0255e6</span><span>7.5531e6</span><span>6.0808e6</span><span>4.6084e6</span><span>3.1361e6</span><span>1.6638e6</span><b>1.9141e5 Min</b></div>
     </div>
    </div>
    <div class="brand"><b>Ansys</b><span>2021 R2</span></div>

    <svg class="model" viewBox="0 0 1568 1080" preserveAspectRatio="none" shape-rendering="crispEdges">
     <path fill="url(#rimG)" d="M58,650 L62,700 L75,770 L90,850 L130,930 L190,975 L300,1015 L400,1040 L480,1050 L620,1050 L780,1030 L940,990 L1090,945 L1220,880 L1340,800 L1440,690 L1500,575 L1500,510 L1470,350 L700,500 Z"/>
     <path fill="url(#rimB)" d="M88,845 L135,890 L200,930 L300,975 L480,1010 L640,1012 L880,970 L1080,915 L1220,845 L1340,765 L1440,650 L1440,690 L1340,800 L1220,880 L1090,945 L940,990 L780,1030 L620,1050 L480,1050 L400,1040 L300,1015 L190,975 L130,930 L90,850 Z"/>
     <path fill="#0080b4" d="M58,650 L70,590 L120,510 L200,440 L300,370 L360,320 L1070,135 L1200,165 L1330,230 L1430,300 L1470,350 L1492,430 L1480,490 L1400,570 L1270,680 L1100,770 L850,865 L700,885 L580,900 L390,880 L230,850 L85,750 L60,680 Z"/>
     <path fill="#00a8ae" d="M180,660 L200,580 L250,500 L350,450 L1180,400 L1280,400 L1335,440 L1300,520 L1200,640 L1040,720 L870,790 L700,825 L500,830 L360,800 L230,740 Z"/>
     <path fill="#0086b8" d="M385,805 L500,835 L700,830 L870,795 L1040,725 L1100,690 L1240,630 L1280,560 L1340,450 L1430,400 L1460,440 L1430,520 L1300,620 L1100,740 L850,840 L700,870 L560,880 L385,860 Z"/>
     <path fill="#00a8a8" d="M1190,395 L1450,360 L1475,400 L1440,420 L1340,430 L1290,400 L1230,460 L1190,470 Z"/>
     <path fill="#00a800" d="M1070,135 L1200,165 L1330,230 L1430,300 L1470,350 L1440,362 L1285,392 L1240,345 L1100,250 Z"/>
     <path fill="#a0b400" d="M1140,285 L1180,300 L1250,345 L1285,378 L1450,340 L1450,358 L1285,392 L1240,350 Z"/>
     <path fill="#1e3a10" d="M1100,255 L1150,268 L1210,305 L1260,355 L1270,388 L1225,335 L1160,295 Z"/>
     <path fill="url(#hubS)" d="M330,520 L345,640 L420,710 L560,750 L750,742 L950,680 L1100,590 L1185,480 L1180,350 L1100,260 L600,400 Z"/>
     <path fill="#0078aa" d="M330,520 L345,590 L470,650 L640,665 L860,620 L1040,530 L1175,390 L1100,260 L600,400 Z"/>
     <path fill="#004f6e" d="M345,590 L470,650 L640,665 L860,620 L1040,530 L1120,455 L1120,495 L1040,570 L860,650 L640,700 L470,680 L345,640Z"/>
     <path fill="#00c2cc" d="M1120,455 L1175,390 L1185,480 L1100,590 L1050,620 L1100,520 Z"/>
     <path fill="url(#cylT)" d="M358,330 L365,420 L385,510 L430,580 L560,630 L650,640 L800,600 L950,520 L1060,430 L1105,340 L1090,210 Z"/>
     <path fill="url(#cylN)" d="M358,330 L365,420 L385,510 L430,525 L560,565 L650,572 L800,540 L950,465 L1060,395 L1105,310 L1090,210 Z"/>
     <path fill="#0000b6" d="M355,315 L400,240 L500,160 L620,110 L760,75 L890,70 L980,85 L1050,125 L1085,180 L1095,235 L1060,290 L1000,340 L900,395 L780,440 L650,462 L530,458 L455,437 L385,395 Z"/>
     <path fill="#005eb0" d="M685,190 L740,145 L855,150 L945,88 L1000,100 L960,150 L975,190 L930,240 L880,260 L820,200 L760,180 Z M555,290 L530,360 L600,375 L660,360 L600,320 Z"/>
     <path fill="url(#holeG)" d="M558,300 L600,240 L700,195 L800,180 L870,200 L893,235 L870,280 L790,325 L690,352 L600,345 L560,320Z"/>
     <path fill="#00a8aa" d="M600,345 L690,310 L790,280 L860,285 L790,325 L690,352 Z"/>
     <path fill="#003a56" d="M700,195 L800,180 L870,200 L893,235 L860,215 L800,200 L720,210 Z"/>
     <g fill="none" stroke="#000" stroke-width="1">
      <path vector-effect="non-scaling-stroke" d="M70,770 L90,850 L100,790 L130,930 L140,810 L165,950 L170,825 L195,970 L230,850 L240,985 L270,860 L300,1015 L330,875 L365,1030 L380,880 L420,1040 L470,895 L480,1050 L520,900 L550,1050 L580,900 L630,1050 L665,900 L690,1040 L720,890 L770,1030 L775,880 L830,1015 L865,860 L885,1005 L920,840 L950,985 L960,825 L1010,970 L1060,790 L1080,945 L1100,775 L1130,925 L1150,745 L1170,905 L1190,725 L1220,880 L1230,705 L1270,850 L1270,675 L1310,820 L1310,640 L1350,790 L1345,610 L1385,760 L1380,580 L1420,715 L1415,550 L1450,680 L1440,520 L1475,620 L1470,495 L1495,570 L1490,470"/>
      <path vector-effect="non-scaling-stroke" d="M100,790 L110,880 M140,810 L150,930 M200,835 L215,975 M300,868 L330,1025 M425,888 L450,1045 M505,898 L520,1050 M620,900 L600,1050 M700,890 L730,1036 M815,870 L790,1025 M900,848 L915,995 M1010,808 L1040,958 M1125,760 L1150,915 M1210,715 L1245,865 M1290,660 L1330,805 M1365,595 L1400,735 M1430,530 L1465,640"/>
      <path vector-effect="non-scaling-stroke" d="M60,680 L85,750 L230,850 L390,880 L580,900 L700,885 L850,865 L1100,770 L1270,680 L1400,570 L1492,470 M64,690 L88,760 L232,858 L392,888 L582,908 L702,893 L852,873 L1102,778 L1272,688 L1402,578 L1494,480"/>
      <path vector-effect="non-scaling-stroke" d="M60,680 L90,620 L70,590 L130,560 L120,510 L175,490 L200,440 L245,440 L300,370 L340,400 L360,320 M85,750 L150,745 L160,800 L230,780 L300,860 L380,800 L450,885 L505,845 L580,900 L640,850 L705,840 L760,880 L845,820 L900,845 L985,770 L1040,790 L1090,740 L1150,745 L1190,690 L1230,700 L1265,625 L1320,640 L1335,565 L1380,580 L1400,490 L1440,520 L1430,450 L1492,470 M1390,435 L1490,430 M90,620 L160,632 M130,560 L175,555 M175,490 L245,478"/>
      <path vector-effect="non-scaling-stroke" d="M60,680 L160,632 L175,555 L120,510 M175,555 L245,478 L200,440 M245,478 L295,525 L175,555 M295,525 L340,450 L300,370 M245,478 L340,450 M160,632 L260,630 L175,555 M260,630 L295,525 M160,632 L185,720 L60,680 M185,720 L260,630 L300,718 L185,720 M300,718 L410,775 L380,800 M185,720 L230,780 L85,750 M230,780 L300,718 L380,800 L230,780 M230,780 L230,850 L380,800 L390,880 M380,800 L505,845 L390,880 M505,845 L580,900 L705,840 L505,845 L495,790 L380,800 M410,775 L495,790 L575,770 L705,840 L775,780 L660,755 L575,770 M705,840 L845,820 L775,780 L860,720 L950,685 M775,780 L985,770 L860,720 L845,820 L985,770 L1090,740 L950,685 L1040,645 L1090,740 L1190,690 L1110,595 L1040,645 M1190,690 L1265,625 L1190,590 L1110,595 M1190,690 L1270,680 L1265,625 L1335,565 L1400,570 L1400,490 L1335,565 L1270,490 L1190,590 L1185,490 L1270,490 L1390,435 L1400,490 M1390,435 L1330,400 L1270,490 L1285,392 L1330,400 M1090,740 L1100,770 L985,770 L850,865 L845,820 M1190,690 L1100,770 M1265,625 L1270,680 M1400,490 L1492,470 M1390,435 L1475,370 L1470,350 M260,630 L340,640 L300,718 M340,640 L270,675 M260,630 L270,675 L185,720 M300,718 L360,700 L410,775 L420,710 M495,790 L420,710 M575,770 L560,750 M660,755 L660,750 M860,720 L850,690"/>
      <path vector-effect="non-scaling-stroke" d="M1070,135 L1150,150 L1110,215 L1205,220 L1150,150 M1205,220 L1275,250 L1160,265 L1110,215 M1275,250 L1330,300 L1205,220 M1275,250 L1330,230 M1330,300 L1430,300 L1385,335 L1330,300 L1300,360 L1260,350 M1385,335 L1450,340 L1380,370 L1300,360 M1380,370 L1285,392 M1330,300 L1385,335"/>
      <path vector-effect="non-scaling-stroke" d="M330,520 L345,640 L420,710 L560,750 L750,742 L950,680 L1100,590 L1185,480 M345,590 L470,650 L640,665 L860,620 L1040,530 L1175,390 M470,650 L415,715 M470,650 L570,750 M640,665 L570,750 M650,640 L660,750 M750,620 L755,740 L860,720 L850,600 M940,600 L950,685 L850,600 M1015,555 L1040,645 L940,600 M1090,510 L1110,595 L1015,555 M1150,520 L1090,510 L1140,460 L1150,520 M1180,350 L1140,460 M380,500 L345,590 M330,520 L380,560"/>
      <path vector-effect="non-scaling-stroke" d="M358,330 L365,420 L385,510 L430,580 L560,630 L650,640 L800,600 L950,520 L1060,430 L1105,340 M455,437 L480,600 M455,437 L380,510 M530,458 L530,610 M530,458 L650,550 L775,525 L875,500 L960,470 L1075,400 M455,437 L560,630 M650,550 L560,630 M650,550 L650,640 M775,525 L650,640 M775,525 L850,600 L875,500 L940,600 L960,470 L1015,555 L1075,400 L1090,510 M1075,400 L1105,340 M650,550 L650,470 M960,470 L1060,300"/>
      <path vector-effect="non-scaling-stroke" d="M355,315 L400,240 L500,160 L620,110 L760,75 L890,70 L980,85 L1050,125 L1085,180 L1095,235 L1060,290 L1000,340 L900,395 L780,440 L650,462 L530,458 L455,437 L385,395 Z M500,160 L640,205 L620,110 M500,160 L560,285 L640,205 L700,195 L745,125 L675,90 M745,125 L640,205 M745,125 L855,155 L890,70 M855,155 L770,75 M855,155 L800,180 M855,155 L980,85 M855,155 L1000,220 L1050,125 M855,155 L893,235 L1000,220 L1090,235 M893,235 L985,340 L1000,220 M985,340 L1060,290 M985,340 L880,455 L845,310 L790,325 M845,310 L985,340 M845,310 L700,400 L690,352 M845,310 L880,455 M700,400 L530,458 L455,437 L700,400 L780,440 M700,400 L880,400 L990,340 M455,437 L560,335 L700,400 M560,335 L450,300 L455,437 M450,300 L360,315 M450,300 L500,160 M450,300 L560,285 M360,315 L545,290 M450,315 L385,395 M455,437 L385,395 M745,125 L1000,100"/>
      <path vector-effect="non-scaling-stroke" d="M558,300 L600,240 L700,195 L800,180 L870,200 L893,235 L870,280 L790,325 L690,352 L600,345 L560,320Z M600,240 L640,340 L700,225 L740,330 L790,215 L790,325 L860,220 M600,290 L640,340 M600,240 L590,345 M700,225 L650,345"/>
      <path vector-effect="non-scaling-stroke" d="M440,295 L480,290 L470,310 Z M745,112 L775,118 L760,135 Z M985,215 L1020,220 L1005,240 Z M690,390 L730,395 L710,412 Z"/>
     </g>
    </svg>

    <div class="scale">
     <div class="sl-top"><span>0.000</span><span>0.100</span><span class="u">0.200 (m)</span></div>
     <div class="sbar"><i></i><i class="w"></i><i></i><i class="w"></i></div>
     <div class="sl-bot"><span>0.050</span><span>0.150</span></div>
    </div>

    <svg class="triad" viewBox="0 0 720 510">
     <circle cx="402" cy="110" r="26" fill="#8c0000"/>
     <path d="M400,108 L410,108 L394,193 L381,193 Z" fill="#f00000"/>
     <path d="M388,190 L388,205 L195,228 L195,213 Z" fill="#0000a8"/>
     <path d="M192,198 L198,248 L132,228 Z" fill="#000072"/>
     <path d="M382,200 L396,198 L425,370 L412,376 Z" fill="#006e00"/>
     <path d="M397,372 L447,365 L432,428 Z" fill="#005a00"/>
     <circle cx="298" cy="268" r="26" fill="url(#ball)"/>
     <text x="418" y="67" class="tx-x">X</text>
     <text x="100" y="236" class="tx-z">Z</text>
     <text x="448" y="467" class="tx-y">Y</text>
    </svg>
   </div>

   <div class="bottom">
    <section class="graph">
     <div class="phead lite"><span>Graph</span><i class="hdots"></i><i class="dd"></i><svg class="ph" viewBox="0 0 12 14"><path d="M4 1h4v7h2v1H7v5H5V9H2V8h2z" fill="currentColor"/></svg><i class="psq"></i><svg class="ph" viewBox="0 0 12 12"><path d="M2 2l8 8M10 2l-8 8" stroke="currentColor" stroke-width="1.800"/></svg></div>
     <div class="gtool">
      <i class="grip"></i><span class="anim">Animation</span>
      <svg class="ga ml10" viewBox="0 0 14 16"><rect x="0" y="1" width="2.500" height="14" fill="#999"/><path d="M13 1v14L4 8z" fill="#bbb"/></svg>
      <svg class="ga ml8" viewBox="0 0 14 16"><path d="M1 1v14l10-7z" fill="#c79d12"/></svg>
      <b class="tbtn on ml3"><i class="stopb"></i></b>
      <svg class="ga ml5" viewBox="0 0 14 16"><path d="M1 1v14l9-7z" fill="#bbb"/><rect x="11" y="1" width="2.500" height="14" fill="#999"/></svg>
      <i class="tsep ml5"></i>
      <b class="tbtn on ml3"><svg viewBox="0 0 18 18"><rect x="4" y="2" width="10" height="11" fill="#fff" stroke="#18a018"/><path d="M7 2v11M10 2v11" stroke="#18a018"/><path d="M2 16h14" stroke="#d01010" stroke-dasharray="2 1" stroke-width="1.500"/></svg></b>
      <b class="tbtn"><svg viewBox="0 0 18 18"><rect x="4" y="2" width="10" height="11" fill="#fff" stroke="#1a60c0"/><path d="M7 2v11M10 2v11" stroke="#1a60c0"/><path d="M2 16h14" stroke="#d01010" stroke-dasharray="2 1" stroke-width="1.500"/></svg></b>
      <i class="tsep ml1"></i>
      <div class="gcb ml4"><span>20 Frames</span><i class="arr"></i></div><div class="gcb"><span>2 Sec (Auto)</span><i class="arr"></i></div>
      <i class="tsep ml5"></i>
      <b class="tbtn ml2"><svg viewBox="0 0 18 18"><rect x="2" y="2" width="10" height="14" fill="#fff" stroke="#333"/><path d="M2 5h10" stroke="#333" stroke-dasharray="2 1"/><path d="M5 8l5 0" stroke="#d02020" stroke-width="2"/><rect x="10" y="9" width="6" height="7" fill="#fff" stroke="#1a60c0"/></svg></b>
      <i class="tsep ml4"></i>
      <b class="tbtn ml2"><svg><use href="#zm"/></svg></b>
      <b class="tbtn"><svg viewBox="0 0 18 18"><g stroke-width="2.400"><path d="M2 3h14" stroke="#e00000" stroke-dasharray="2 1"/><path d="M2 8h14" stroke="#10c010" stroke-dasharray="2 1"/><path d="M2 13h14" stroke="#0000e0" stroke-dasharray="2 1"/></g></svg></b>
      <b class="tbtn"><svg viewBox="0 0 18 18"><path d="M2 10l9-7 4 5-9 7z" fill="#aaa"/><circle cx="14" cy="4" r="2" fill="#aaa"/></svg></b>
      <i class="tsep ml4"></i>
      <b class="tbtn ml2"><svg viewBox="0 0 18 18"><rect x="2" y="4" width="14" height="10" fill="#aaa" stroke="#888"/><path d="M4 9h10" stroke="#ddd"/></svg></b>
      <b class="tbtn"><svg viewBox="0 0 18 18"><rect x="2" y="4" width="14" height="10" fill="#aaa" stroke="#888"/><path d="M4 9h10" stroke="#ddd"/><path d="M14 12v5" stroke="#888"/></svg></b>
      <i class="tsep ml1"></i>
      <b class="tbtn ml3"><svg viewBox="0 0 18 18"><path d="M2 2v14M2 12h2v-6l2 9 2-12 2 10 2-6 2 5h3" fill="none" stroke="#aaa"/></svg></b>
      <div class="cyc">3 Cycles</div><b class="sa2">SA</b><i class="arr dk sae"></i>
     </div>
     <div class="plot">
      <svg class="chart" width="813" height="161" viewBox="292 859 813 161">
       <path d="M396 883H1081M386 883h10M386 918h10M386 938H1081" stroke="#a0a0a0" fill="none"/>
       <path d="M396 883V938" stroke="#c8c8c8"/>
       <path d="M396.500 938v5M482 938v5M568 938v5M653 938v5M739 938v5M824 938v5M910 938v5M995 938v5M1081 938v5" stroke="#a0a0a0"/>
       <path d="M533 928 L670 918 L875 901 L1081 883" stroke="#0a800a" fill="none" stroke-width="1.200"/>
       <path d="M533 935.500 L670 931 L875 925 L1081 917.500" stroke="#0000cc" fill="none" stroke-width="1.200"/>
       <path d="M533 938 L670 938 L875 938 L980 937.500 L1081 937" stroke="#c00000" fill="none" stroke-width="1.200"/>
       <path d="M1081 877V938" stroke="#000" stroke-width="3"/>
       <path d="M531.500 926.500h3v3h-3zM668.500 916.500h3v3h-3zM873.500 899.500h3v3h-3zM1079.500 881.500h3v3h-3z" fill="#0a800a"/>
       <path d="M531.500 933.500h3v3h-3zM668.500 929.500h3v3h-3zM873.500 923.500h3v3h-3zM1079.500 916h3v3h-3z" fill="#0000cc"/>
       <path d="M531.500 936.500h3v3h-3zM668.500 936.500h3v3h-3zM873.500 936.500h3v3h-3zM1079.500 935.500h3v3h-3z" fill="#c00000"/>
       <g class="ct">
        <text x="384" y="887" text-anchor="end">1.3443e+7</text><text x="384" y="922" text-anchor="end">5.e+6</text><text x="384" y="942" text-anchor="end">10818</text>
        <text x="397" y="959" text-anchor="middle">0.</text><text x="492" y="959" text-anchor="middle">0.125</text><text x="575" y="959" text-anchor="middle">0.25</text><text x="664" y="959" text-anchor="middle">0.375</text><text x="743" y="959" text-anchor="middle">0.5</text><text x="835" y="959" text-anchor="middle">0.625</text><text x="918" y="959" text-anchor="middle">0.75</text><text x="1006" y="959" text-anchor="middle">0.875</text><text x="1076" y="959" text-anchor="middle">1.</text>
       </g>
       <g class="ctb">
        <text x="1075" y="874" text-anchor="middle">1.</text><text x="739" y="983" text-anchor="middle">[s]</text><text transform="translate(327 908) rotate(-90)" text-anchor="middle">[Pa]</text>
       </g>
      </svg>
      <div class="gslider">1</div>
     </div>
    </section>
    <section class="tabular">
     <div class="phead lite"><span>Tabular Data</span><i class="hdots"></i><i class="dd"></i><svg class="ph" viewBox="0 0 12 14"><path d="M4 1h4v7h2v1H7v5H5V9H2V8h2z" fill="currentColor"/></svg><i class="psq"></i><svg class="ph" viewBox="0 0 12 12"><path d="M2 2l8 8M10 2l-8 8" stroke="currentColor" stroke-width="1.800"/></svg></div>
     <div class="tgrid">
      <table class="td">
       <tr class="hd"><th class="n"></th><th class="c0">Time [s]</th><th class="c1w"><i class="ckb"></i><span class="red">Minimum [Pa]</span></th><th class="c1w"><i class="ckb"></i><span class="grn">Maximum [Pa]</span></th><th class="c2w"><i class="ckb"></i><span class="blu">Average [Pa]</span></th></tr>
       <tr><th class="n">1</th><td>0.2</td><td>10818</td><td>2.3972e+006</td><td>7.8283e+005</td></tr>
       <tr><th class="n">2</th><td>0.4</td><td>32533</td><td>4.9284e+006</td><td>1.6824e+006</td></tr>
       <tr><th class="n">3</th><td>0.7</td><td>94104</td><td>9.0031e+006</td><td>3.2577e+006</td></tr>
       <tr><th class="n">4</th><td>1.</td><td>1.9141e+005</td><td>1.3443e+007</td><td>5.1081e+006</td></tr>
      </table>
     </div>
    </section>
   </div>
  </div>
 </main>

 <footer class="status">
  <svg class="msg" viewBox="0 0 16 16"><path d="M1 6h11v7H6l-3 3v-3H1z" fill="#f4c63c" stroke="#b08a10"/><circle cx="9" cy="5" r="5" fill="#1030c0" stroke="#fff"/><text x="9" y="8" font-size="7" font-weight="700" text-anchor="middle" fill="#fff" font-family="Liberation Serif">i</text></svg>
  <span class="s-m">2 Messages</span><span class="s-n">No Selection</span><i class="up"></i><span class="s-u">Metric (m, kg, N, s, V, A)</span><span class="s-d">Degrees</span><span class="s-r">rad/s</span><span class="s-c">Celsius</span>
 </footer>

 <footer class="taskbar">
  <svg class="start" viewBox="0 0 18 18"><path d="M0 3l7-1v6.500H0zM8 2l10-1.500v8H8zM0 9.500h7V16l-7-1zM8 9.500h10v8L8 16z" fill="#fff"/></svg>
  <div class="search"><svg viewBox="0 0 18 18"><circle cx="11" cy="7" r="5.500" fill="none" stroke="#222" stroke-width="1.300"/><path d="M7 11l-6 6" stroke="#222" stroke-width="1.600"/></svg><span>Type here to search</span></div>
  <svg class="tbi cort" viewBox="0 0 18 18"><circle cx="9" cy="9" r="7" fill="none" stroke="#fff" stroke-width="2"/></svg>
  <svg class="tbi tview" viewBox="0 0 18 20"><path d="M2 1h9M2 19h9" stroke="#fff"/><rect x="1.500" y="4.500" width="10" height="11" fill="none" stroke="#fff"/><path d="M14 1h3M14 5h3M14 10h3M14 15h3M14 19h3" stroke="#fff" stroke-width=".9"/></svg>
  <svg class="tbi edge" viewBox="0 0 24 24"><path d="M22 13C22 6 17 1 11 1 5 1 1 6 1 12c0 7 6 11 12 11 3 0 5-1 7-2-5 2-11-1-11-7 0-3 3-5 6-5 3 0 4 2 4 4 0 1 3 1 3 0z" fill="url(#edgeG)"/></svg>
  <div class="tbslot act"><svg class="tbi" viewBox="0 0 24 24"><path d="M2 3h7l2 3h11v15H2z" fill="#f8c93e"/><path d="M2 9h20v12H2z" fill="#f5d96a"/><rect x="7" y="14" width="10" height="7" fill="#2f8ed6"/><rect x="10" y="17" width="4" height="4" fill="#f5d96a"/></svg></div>
  <svg class="tbi store" viewBox="0 0 24 24"><path d="M8 6V3a4 4 0 0 1 8 0v3" fill="none" stroke="#2f9ad8" stroke-width="1.600" transform="translate(0 1)"/><rect x="2" y="6" width="20" height="18" rx="2" fill="#f4f4f4"/><rect x="7" y="10" width="4.500" height="4.500" fill="#e8472b"/><rect x="12.500" y="10" width="4.500" height="4.500" fill="#72b82c"/><rect x="7" y="15.500" width="4.500" height="4.500" fill="#1a95d8"/><rect x="12.500" y="15.500" width="4.500" height="4.500" fill="#f4b82a"/></svg>
  <svg class="tbi mail" viewBox="0 0 24 24"><path d="M1 9L12 1l11 8v14H1z" fill="#1070c0"/><path d="M1 9l11 8 11-8v14H1z" fill="#36b4ee"/><path d="M5 5h14v6l-7 5-7-5z" fill="#fff"/><path d="M1 23l11-8 11 8z" fill="#7fd2f6"/></svg>
  <div class="tbslot act2"><div class="appic"><svg viewBox="0 0 24 18"><g fill="none" stroke="#f0a816" stroke-width="1.600"><path d="M12 1l3 2v3l-3 2-3-2V3z"/><path d="M7 7l3 2v3l-3 2-3-2V9z"/><path d="M17 7l3 2v3l-3 2-3-2V9z"/><path d="M12 11l3 2v3l-3 2-3-2v-3z"/></g></svg><span>WB</span></div></div>
  <div class="tbslot cur"><div class="appic"><svg viewBox="0 0 24 18"><g fill="none" stroke="#f0a816"><circle cx="15" cy="5" r="3" stroke-width="2.200" stroke-dasharray="2 .6"/><circle cx="9" cy="12" r="4" stroke-width="2.500" stroke-dasharray="2 .8"/></g></svg><span>M</span></div></div>
  <div class="tray">
   <svg class="sunic" viewBox="0 0 20 20"><circle cx="10" cy="10" r="9.500" fill="url(#sun)"/></svg>
   <span class="tmp">75°F</span><span class="sun">Sunny</span>
   <svg class="tc" viewBox="0 0 14 8"><path d="M1 7l6-6 6 6" fill="none" stroke="#fff"/></svg>
   <svg class="tn" viewBox="0 0 18 16"><rect x="4.500" y="2.500" width="13" height="9" fill="none" stroke="#fff"/><rect x="1.500" y="1.500" width="5" height="5" fill="#4a3f2e" stroke="#fff"/><path d="M11 12v3M7 15h8" stroke="#fff"/></svg>
   <svg class="ts" viewBox="0 0 16 14"><path d="M1 5h2l4-4v12l-4-4H1z" fill="none" stroke="#fff"/><path d="M10 5l4 4M14 5l-4 4" stroke="#fff"/></svg>
   <div class="clock"><span>12:59 PM</span><span>11/17/2021</span></div>
   <svg class="nt" viewBox="0 0 16 15"><path d="M.500.500h15v11h-5l-2 2-2-2h-6z" fill="none" stroke="#fff"/></svg>
  </div>
 </footer>
</div>
</body>
</html>
```
FILE: styles.css
```css
*{box-sizing:border-box}
html,body{margin:0;height:100%;overflow:hidden}
body{font-family:"Open Sans","Noto Sans",sans-serif;font-size:11px;color:#333;background:#eeeef2}
i,b{font-style:normal}
.sprite{position:absolute;width:0;height:0}
.app{display:flex;flex-direction:column;height:1080px;width:1920px}
.ml1{margin-left:1px}.ml2{margin-left:2px}.ml3{margin-left:3px}.ml4{margin-left:4px}.ml5{margin-left:5px}.ml8{margin-left:8px}.ml10{margin-left:10px}

.arr{display:inline-block;width:0;height:0;border:3.500px solid transparent;border-top:4px solid #777;border-bottom:0}
.arr.dk{border-top-color:#222}

/* title */
.titlebar{height:26px;display:flex;position:relative;background:#eeeef2}
.tb-left{display:flex;align-items:flex-start;width:182px}
.logo{width:17px;height:20px;margin:3px 0 0 8px}
.vsep{width:1px;height:23px;background:#ccc;margin-left:6px}
.save{width:14px;height:18px;margin:4px 0 0 5px}
.qa{margin:8px 0 0 6px;border-top-color:#555}
.context{width:59px;height:26px;background:#d5e1f2;border-top:4px solid #2b579a;margin-left:auto;color:#2b579a;font-size:11px;text-align:center;line-height:21px}
.title{position:absolute;left:800px;top:6px;color:#444;font-size:11px;line-height:16px;white-space:nowrap}
.rdp{position:absolute;left:901px;top:0;width:118px;height:15px;background:#2a2a2a;border:1px solid #111;border-top:0;border-radius:0 0 4px 4px;display:flex;align-items:center;justify-content:center;gap:10px}
.dots{width:34px;height:7px;background-image:radial-gradient(#999 1px,transparent 1.100px);background-size:4px 3.500px}
.rdp-a{width:0;height:0;border:5px solid transparent;border-top:6px solid #fff;border-bottom:0}
.winctl{margin-left:auto;display:flex;align-items:flex-start;padding-top:8px}
.wmin{width:9px;height:2px;background:#222;margin-top:7px}
.wres{width:10px;height:11px;margin-left:25px}
.wclose{width:11px;height:11px;margin:-1px 13px 0 22px}

/* tabs */
.tabs{height:24px;display:flex;align-items:stretch;background:#eeeef2;font-size:11.500px;position:relative}
.t-file{width:56px;background:#0072c6;color:#fff;text-align:center;line-height:23px}
.t-home{width:57px;margin-left:8px;background:#fbfbfb;border:1px solid #c8c8c8;border-bottom:0;text-align:center;line-height:23px;height:25px;z-index:1;position:relative}
.t-i{line-height:24px}
.t1{margin-left:15px}.t2{margin-left:28px}.t3{margin-left:27px}.t4{margin-left:28px}
.quick{margin-left:auto;display:flex;align-items:center;padding-bottom:2px}
.ql{width:160px;height:21px;background:#fff;border:1px solid #cdcdd8;color:#999;font-size:11px;line-height:19px;padding-left:3px;margin-right:4px}
.ic12{width:12px;height:9px;margin-right:9px}
.ic14{width:14px;height:14px;margin-right:8px}
.help{width:14px;height:14px;border-radius:50%;background:#4f9bf0;color:#fff;font-weight:700;text-align:center;line-height:14px;font-size:10px}
.quick .arr{margin:0 3px 4px 0}

/* ribbon */
.ribbon{height:87px;display:flex;background:#fbfbfb;border-top:1px solid #c8c8c8;border-bottom:1px solid #c8c8c8;padding-top:5px}
.grp{height:74px;border-right:1px solid #c8c8c8;display:flex;flex-direction:column;position:relative}
.g-outline{width:176px}
.g-outline .gl{padding-left:3px}
.g-solve{width:231px;padding-left:6px}
.g-solve .gl{margin-left:-3px}
.g-insert{width:351px}
.g-tools{width:501px}
.g-layout{width:156px}
.g-layout .gl{padding-left:4px}
.gb{display:flex;height:63px;margin-top:-2px;flex:none}
.gl{text-align:center;line-height:14px;margin-top:-1px;font-size:11px;color:#444}
.col{display:flex;flex-direction:column}
.w52{width:52px}.w58{width:58px}.w122{width:122px}.w80{width:80px}.w95{width:95px}.w87{width:87px}.w135{width:135px}.w110{width:110px}.w104{width:104px}
.w54{width:54px}.w40{width:40px}.w60{width:60px}.w50{width:50px}.w64{width:64px}.w51{width:51px}
.g-outline .big{margin:0 3px 0 8px}
.ri{height:21px;display:flex;align-items:center;white-space:nowrap;font-size:11.100px;flex:none}
.ri svg{width:16px;height:16px;margin:0 1px 0 1px;flex:none}
.ri svg.sm{width:13px;height:13px;margin-right:4px}
.ri .arr{margin-left:3px}
.dis{color:#a4a4a4}
.big{display:flex;flex-direction:column;align-items:center;text-align:center;font-size:11.200px;line-height:12.500px;padding-top:4px;flex:none}
.i30{width:30px;height:30px;margin-bottom:5px;flex:none}
.big .arr{margin-top:4px}
.solvec{width:120px}
.combo{width:120px;height:21px;background:#fff;border:1px solid #c8c8d4;display:flex;align-items:center;justify-content:space-between;padding:0 6px 0 3px;font-size:11.200px;flex:none}
.dist{height:21px;display:flex;align-items:center;padding-left:4px;font-size:11.200px;flex:none}
.cb{width:11px;height:11px;border:1px solid #999;background:#f4f4f4;margin-right:8px;position:relative}
.cb.on::after{content:"";position:absolute;left:2px;top:0;width:4px;height:7px;border:solid #555;border-width:0 1.500px 1.500px 0;transform:rotate(40deg)}
.cores{height:21px;display:flex;align-items:center;padding-left:2px;font-size:11.200px;flex:none}
.inp{width:46px;height:21px;border:1px solid #c8c8d4;background:#fff;margin-left:5px;padding-left:3px;line-height:19px}
.launcher{position:absolute;right:8px;bottom:3px;width:7px;height:7px;border-left:1px solid #777;border-top:1px solid #777}

/* workspace */
.work{flex:1;display:flex;min-height:0}
.left{width:292px;padding-right:4px;display:flex;flex-direction:column;flex:none}
.outline{height:527px;display:flex;flex-direction:column}
.phead{height:20px;display:flex;align-items:center;background:#f4f4f8;color:#444;padding-left:4px;font-size:11.500px;flex:none}
.phead.dh{font-size:11px}
.phead.blue{background:#0072c6;color:#fff}
.phead span{white-space:nowrap}
.hdots{flex:1;height:5px;margin:0 4px;background-image:radial-gradient(#a8a8b8 .6px,transparent .7px);background-size:2px 2px}
.blue .hdots{background-image:radial-gradient(#5ea8e0 .6px,transparent .7px)}
.dd{width:0;height:0;border:4px solid transparent;border-top:5px solid currentColor;border-bottom:0;margin-right:6px}
.ph{width:11px;height:13px;flex:none}
.ph:last-child{margin:0 7px 0 5px}
.psq{width:11px;height:11px;border:1.500px solid currentColor;margin-left:6px;flex:none}
.otool{height:27px;display:flex;align-items:center;background:#eeeef2;flex:none}
.grip{width:4px;height:14px;margin-left:9px;background-image:radial-gradient(#999 .8px,transparent .9px);background-size:3px 3px;flex:none}
.obox{height:20px;background:#fff;border:1px solid #c8c8d4;display:flex;align-items:center;padding-left:3px}
.o1{width:99px;margin-left:9px;justify-content:space-between;padding-right:4px}
.o2{width:90px;margin-left:1px;color:#aaa}
.filt{width:13px;height:9px;margin-left:5px}
.o3{margin:10px 0 0 7px}
.treewrap{flex:1;background:#fff;position:relative}
.conn{position:absolute;left:0;top:0;pointer-events:none}
.tr{height:16px;display:flex;align-items:center;position:relative;white-space:nowrap;color:#222;font-size:10.300px}
.tr.b{font-weight:700;color:#111;font-size:11px}
.ti{width:15px;height:14px;flex:none}
.ck{width:9px;height:10px;flex:none;margin-top:4px}
.tx{margin-left:4px;line-height:15px}
.exp{display:inline-block;width:9px;height:9px;border:1px solid #777;background:#fff;flex:none;position:relative}
.exp::before{content:"";position:absolute;left:1px;right:1px;top:3px;height:1px;background:#333}
.exp.p::after{content:"";position:absolute;top:1px;bottom:1px;left:3px;width:1px;background:#333}
.lp{padding-left:10px}
.lp .tx{margin-left:4px}
.l1{padding-left:8px}.l1 .exp{margin-right:19px}.l1 .tx{margin-left:5px}
.l2{padding-left:35px}.l2 .exp{margin-right:10px}
.l3{padding-left:81px}
.l3x{padding-left:62px}.l3x .exp{margin-right:10px}
.l4{padding-left:108px}
.sol{background:#ff9c00;padding:0 2px;margin-left:4px;height:16px}
.sel{background:#0f78d4;color:#fff;padding:0 3px;margin-left:3px;outline:1px dotted #222;outline-offset:-1px;height:15px}

/* details */
.details{flex:1;margin-top:3px;display:flex;flex-direction:column;min-height:0}
.dbody{flex:1;display:flex;min-height:0;background:#eeeef2}
.gridclip{width:272px;overflow:hidden;background:#eeeef2;flex:none}
.dt{border-collapse:collapse;table-layout:fixed;width:270px;font-size:11.200px}
.cg{width:13px}.cn{width:122px}.cv2{width:135px}
.dt tr{height:18px}
.dt td{border:1px solid #a6a6a6;padding:0 0 0 3px;height:18px;line-height:14px;white-space:nowrap;overflow:hidden;background:#fff;color:#222}
.dt td.g{border:0;border-right:1px solid #a6a6a6;background:#eeeef2;padding:0 0 0 3px}
.dt .ro{background:#e7e5e1}
.sec td{font-weight:700;color:#111;font-size:11.500px}
.sec td.g .exp{display:block;background:#f8f8f8}
.pb{display:inline-block;width:12px;height:12px;border:1px solid #aaa;vertical-align:-3px;margin-right:5px;font-weight:700;color:#00c;text-align:center;line-height:10px;background:#fff}
.vscroll{width:16px;flex:none;background:#f0f0f0;position:relative;display:flex;flex-direction:column;align-items:center}
.sa{width:10px;height:6px;margin-top:5px;flex:none}
.thumb{width:15px;height:206px;background:#cdcdcd;margin-top:6px;flex:none}
.sa.bot{position:absolute;bottom:3px;margin:0}

/* right */
.right{flex:1;display:flex;flex-direction:column;min-width:0}
.vtool{height:26px;display:flex;align-items:center;background:#eeeef2;white-space:nowrap;font-size:11px;flex:none;padding-bottom:1px}
.vtool>.grip{margin:0 7px 0 11px}
.tbtn{width:22px;height:22px;display:flex;align-items:center;justify-content:center;flex:none}
.tbtn svg{width:18px;height:18px}
.tbtn.on{outline:1px solid #3d9bf0;outline-offset:-1px}
.tbtn.wide{width:32px}
.tbtn.wide .arr{margin-left:1px}
.tsep{width:1px;height:22px;background:#cfcfd6;margin:0 2px;flex:none}
.tsep.r5{margin-right:5px}.tsep.r7{margin-right:7px}
.spl{margin-left:3px}
.tt{display:inline-flex;align-items:center}
.tt.icn svg{width:16px;height:18px;margin-right:1px}
.tt .arr{margin-left:3px}
.sel1{margin:0 8px 0 8px}
.m1{margin-right:5px}
.xyz{width:22px;font-size:6px;color:#aaa;text-align:center;flex:none}
.hund{width:22px;font-size:6px;text-align:center;color:#222;text-decoration:underline;flex:none}
.abc{width:22px;font-size:7px;text-align:center;color:#888;background:#ddd;height:14px;line-height:14px;flex:none}
.empt{margin:0 5px 0 12px}
.sb{margin-left:10px}.cv{margin-left:10px}
.tend{margin:12px 0 0 13px;border-top-color:#222}
.viewport{height:645px;background:linear-gradient(#6b8bdc,#fff);position:relative;overflow:hidden;flex:none}
.anno{position:absolute;left:15px;top:14px;color:#111;font-size:11.500px;line-height:15px}
.legend{display:flex;margin-top:21px}
.lbar{width:15px;height:153px;border:solid #000;border-width:3px 0;display:flex;flex-direction:column;background:#000;gap:1px}
.lbar i{flex:1}
.c1{background:#f00}.c2{background:#ffb000}.c3{background:#ff0}.c4{background:#b0ff00}.c5{background:#0f0}.c6{background:#00ffb0}.c7{background:#0ff}.c8{background:#00b0ff}.c9{background:#00f}
.llab{margin-left:9px;display:flex;flex-direction:column;margin-top:-8px;justify-content:space-between;line-height:16.800px;height:168px}
.brand{position:absolute;right:19px;top:17px;color:#fff;display:flex;flex-direction:column;align-items:flex-end}
.brand b{font-size:31px;line-height:36px;font-weight:700}
.brand span{font-size:17.500px;line-height:20px;font-weight:600;margin-top:2px}
.model{position:absolute;left:568px;top:177px;width:600px;height:360px;overflow:visible}
.scale{position:absolute;left:593px;top:580px;width:440px;font-size:11.500px;color:#111}
.sl-top{display:flex;height:16px;line-height:16px;position:relative;left:-15px}
.sl-top span{width:220px;flex:none;white-space:nowrap}
.sbar{display:flex;height:11px;border:1px solid #000}
.sbar i{flex:1;background:#000}
.sbar .w{background:#fff}
.sl-bot{display:flex;padding-left:95px;line-height:16px;margin-top:5px}
.sl-bot span{width:220px;flex:none}
.triad{position:absolute;left:1388px;top:477px;width:240px;height:170px;overflow:visible}
.triad text{font-size:33px;text-anchor:middle;font-family:"Liberation Sans",sans-serif}
.tx-x{fill:#f00}.tx-z{fill:#00f}.tx-y{fill:#0a0}

/* bottom */
.bottom{flex:1;display:flex;padding-top:4px;min-height:0;background:#eeeef2}
.graph{width:813px;display:flex;flex-direction:column;flex:none;margin-right:3px}
.tabular{flex:1;display:flex;flex-direction:column;min-width:0}
.phead.lite{height:18px;background:#f2f2f6;padding-right:2px}
.tabular .phead.lite{height:20px}
.gtool{height:30px;display:flex;align-items:center;background:#eeeef2;flex:none;font-size:11.200px}
.gtool .grip{margin-left:11px;width:5px}
.anim{margin:0 0 0 10px;width:56px;flex:none}
.ga{width:14px;height:16px;flex:none}
.gtool .tsep{margin-right:0}
.stopb{width:13px;height:15px;background:#c99b12;border:1px solid #333}
.gcb{width:100px;height:23px;background:#fff;border:1px solid #ddd;display:flex;align-items:center;justify-content:space-between;padding:0 6px 0 3px;flex:none}
.cyc{width:58px;height:22px;border:1px solid #ccc;color:#aaa;text-align:center;line-height:20px;flex:none}
.sa2{margin-left:6px;font-weight:700;font-size:10.500px;color:#444}
.sae{margin:10px 0 0 8px}
.plot{flex:1;background:#fff;position:relative;min-height:0}
.chart{display:block;position:absolute;left:0;top:0}
.ct text{font-size:11px;fill:#222;font-family:"Open Sans",sans-serif}
.ctb text{font-size:12px;font-weight:700;fill:#111;font-family:"Open Sans",sans-serif}
.gslider{position:absolute;left:104px;top:134px;width:685px;height:15px;background:#eee;border:1px solid #aaa;text-align:center;line-height:13px;color:#222}
.tgrid{flex:1;background:#a0a0a0;min-height:0}
.td{border-collapse:collapse;table-layout:fixed;width:347px;font-size:10.500px}
.td th,.td td{border:1px solid #bdbdbd;height:15px;padding:0 0 0 2px;font-weight:400;text-align:left;background:#e8e6e2;white-space:nowrap;line-height:13px;color:#222;overflow:hidden}
.td .hd th{height:17px;background:#f6f6f6;border-bottom:2px solid #888}
.td th.n{width:15px;padding-left:3px;background:#f0f0f0;border-right:2px solid #777}
.td .c0{width:47px}.td .c1w{width:98px}.td .c2w{width:89px}
.ckb{display:inline-block;width:12px;height:12px;background:#fff;border:1px solid #888;vertical-align:-3px;margin:0 5px 0 1px;position:relative}
.ckb::after{content:"";position:absolute;left:3px;top:0;width:4px;height:8px;border:solid #000;border-width:0 2px 2px 0;transform:rotate(35deg)}
.red{color:#d00020}.grn{color:#0a900a}.blu{color:#1414e0}

/* status */
.status{height:20px;background:#0078c8;color:#fff;display:flex;align-items:center;justify-content:flex-end;font-size:11.300px;flex:none;padding-right:8px;white-space:nowrap}
.msg{width:16px;height:16px;flex:none}
.s-m{margin-left:3px}.s-n{margin-left:19px}
.up{width:0;height:0;border:4px solid transparent;border-bottom:4px solid #fff;border-top:0;margin-left:22px}
.s-u{margin-left:6px}.s-d{margin-left:12px}.s-r{margin-left:13px}.s-c{margin-left:13px}

/* taskbar */
.taskbar{height:40px;background:#4a3f2e;display:flex;align-items:center;flex:none;position:relative;color:#fff}
.start{width:17px;height:17px;margin-left:15px;flex:none}
.search{width:344px;height:40px;margin-left:16px;background:#f0f0f0;display:flex;align-items:center;border-top:1px solid #bbb;flex:none}
.search svg{width:16px;height:16px;margin-left:12px}
.search span{margin-left:12px;color:#3a3a3a;font-size:14px}
.tbi{width:22px;height:24px;flex:none;display:block}
.cort{margin-left:15px;width:18px;height:18px}
.tview{margin-left:31px;width:16px;height:18px}
.edge{margin-left:31px;width:24px;height:24px}
.tbslot{width:40px;height:40px;display:flex;align-items:center;justify-content:center;position:relative;flex:none}
.tbslot::after{content:"";position:absolute;left:0;right:0;bottom:0;height:2px}
.act{margin-left:17px}
.act::after,.act2::after{background:#79b4e0}
.store{margin-left:17px;width:24px}
.mail{margin-left:25px;width:24px}
.act2{margin-left:18px}
.cur{margin-left:4px;width:49px;background:#6e6558}
.cur::after{background:#79b4e0}
.appic{width:24px;height:26px;background:#000;display:flex;flex-direction:column;align-items:center;color:#ddd;font-size:8px;font-weight:700;line-height:8px}
.appic svg{width:24px;height:18px}
.tray{margin-left:auto;display:flex;align-items:center;height:40px;font-size:13px}
.sunic{width:19px;height:19px}
.tmp{margin-left:10px}.sun{margin-left:9px}
.tc{width:13px;height:8px;margin-left:17px}
.tn{width:16px;height:14px;margin-left:9px}
.ts{width:15px;height:13px;margin-left:8px}
.clock{width:76px;display:flex;flex-direction:column;align-items:center;font-size:11.500px;line-height:19px;margin-left:1px}
.nt{width:16px;height:15px;margin:0 25px 0 6px}
```
